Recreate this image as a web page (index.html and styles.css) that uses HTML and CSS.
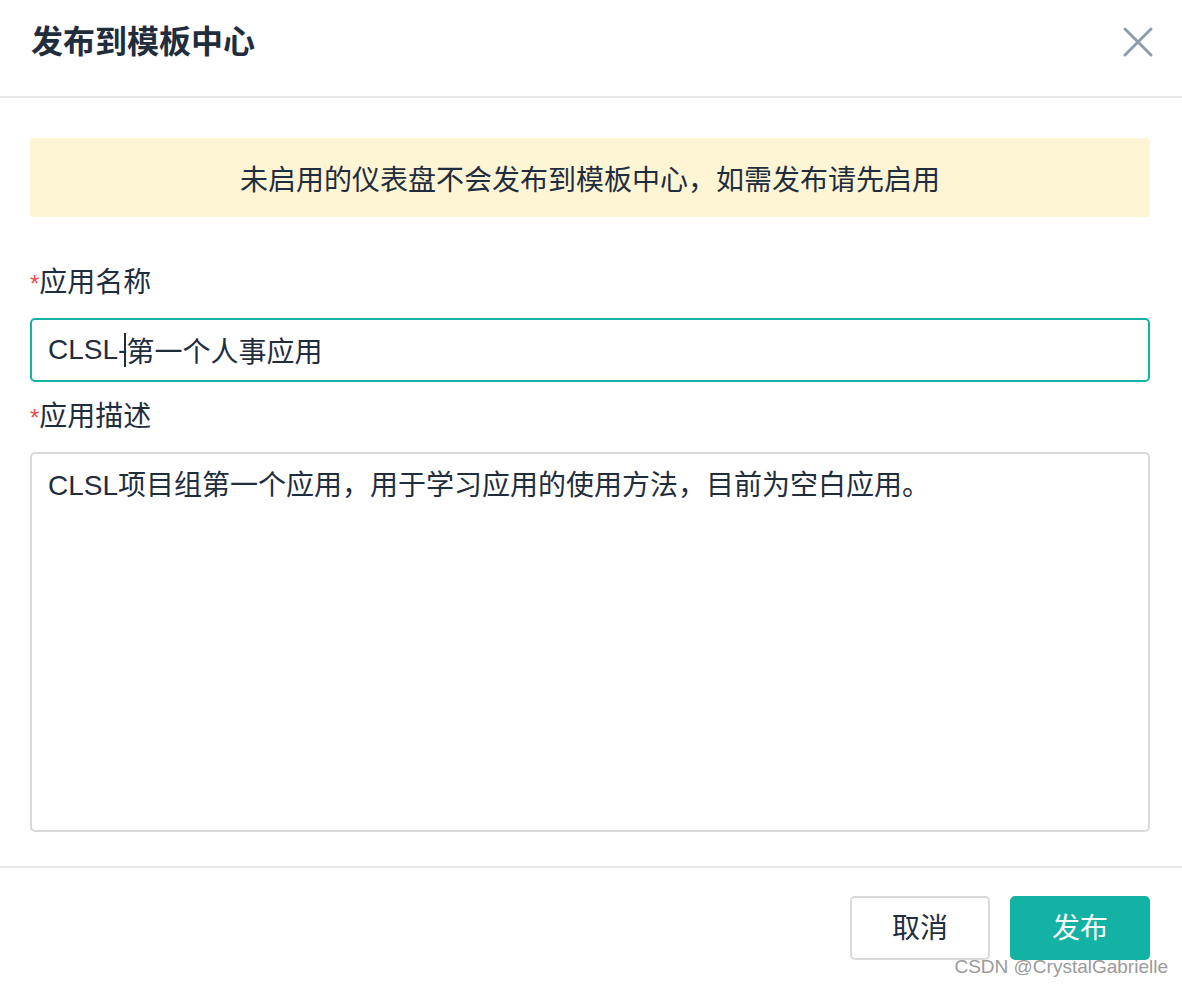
FILE: index.html
```html
<!DOCTYPE html>
<html lang="zh-CN">
<head>
<meta charset="utf-8">
<title>发布到模板中心</title>
<link rel="stylesheet" href="styles.css">
</head>
<body>
<div class="dialog">
  <header class="dialog-header">
    <h1 class="dialog-title">发布到模板中心</h1>
    <button class="close-btn" aria-label="关闭">
      <svg width="32" height="32" viewBox="0 0 32 32"><path d="M3 3 L29 29 M29 3 L3 29" stroke="#8f9cae" stroke-width="3" fill="none" stroke-linecap="round"/></svg>
    </button>
  </header>
  <main class="dialog-body">
    <div class="alert">未启用的仪表盘不会发布到模板中心，如需发布请先启用</div>
    <div class="field">
      <label class="label"><span class="req">*</span>应用名称</label>
      <div class="input focused"><span>CLSL-</span><span class="caret"></span><span>第一个人事应用</span></div>
    </div>
    <div class="field">
      <label class="label"><span class="req">*</span>应用描述</label>
      <div class="textarea">CLSL项目组第一个应用，用于学习应用的使用方法，目前为空白应用。</div>
    </div>
  </main>
  <footer class="dialog-footer">
    <button class="btn btn-default">取消</button>
    <button class="btn btn-primary">发布</button>
  </footer>
  <div class="watermark">CSDN @CrystalGabrielle</div>
</div>
</body>
</html>
```

FILE: styles.css
```css
* { box-sizing: border-box; }
html, body { margin: 0; padding: 0; background: #ffffff; }
body {
  font-family: "Liberation Sans", "Noto Sans CJK SC", sans-serif;
  color: #1f2d3d;
}
.dialog {
  position: relative;
  width: 1182px;
  height: 986px;
  background: #fff;
}
.dialog-header {
  height: 98px;
  border-bottom: 2px solid #e8e8e8;
  display: flex;
  align-items: center;
  justify-content: space-between;
  padding: 0 28px 12px 31px;
}
.dialog-title {
  margin: 0;
  font-size: 32px;
  line-height: 40px;
  font-weight: 700;
  color: #1f2d3d;
}
.close-btn {
  border: none;
  background: none;
  padding: 0;
  width: 32px;
  height: 32px;
  display: flex;
  align-items: center;
  justify-content: center;
}
.dialog-body {
  padding: 40px 32px 34px 30px;
}
.alert {
  height: 79px;
  background: #fef5d5;
  border-radius: 4px;
  display: flex;
  align-items: center;
  justify-content: center;
  font-size: 28px;
  color: #1f2d3d;
  margin-bottom: 48px;
}
.field + .field { margin-top: 17px; }
.label {
  display: block;
  height: 36px;
  line-height: 36px;
  font-size: 28px;
  margin-bottom: 17px;
}
.req { color: #f04a4a; font-size: 24px; }
.input {
  height: 64px;
  border: 2px solid #15b1a4;
  border-radius: 5px;
  display: flex;
  align-items: center;
  padding: 0 16px;
  font-size: 28px;
  color: #1f2d3d;
}
.caret {
  display: inline-block;
  width: 2px;
  height: 34px;
  background: #1f2d3d;
  margin: 0 0 0 -3px;
}
.textarea {
  height: 380px;
  border: 2px solid #d9d9d9;
  border-radius: 5px;
  padding: 14px 16px;
  font-size: 28px;
  line-height: 36px;
  color: #1f2d3d;
}
.dialog-footer {
  border-top: 2px solid #e8e8e8;
  padding: 28px 32px 0 0;
  display: flex;
  justify-content: flex-end;
  gap: 20px;
}
.btn {
  width: 140px;
  height: 64px;
  border-radius: 5px;
  font-size: 28px;
  font-family: "Liberation Sans", "Noto Sans CJK SC", sans-serif;
  cursor: pointer;
  padding: 0 0 4px 0;
}
.btn-default {
  background: #fff;
  border: 2px solid #d9d9d9;
  color: #1f2d3d;
}
.btn-primary {
  background: #14b2a4;
  border: 2px solid #14b2a4;
  color: #fff;
}
.watermark {
  position: absolute;
  right: 14px;
  bottom: 8px;
  font-size: 19px;
  color: #9a9a9a;
  font-family: "Liberation Sans", sans-serif;
}
```
